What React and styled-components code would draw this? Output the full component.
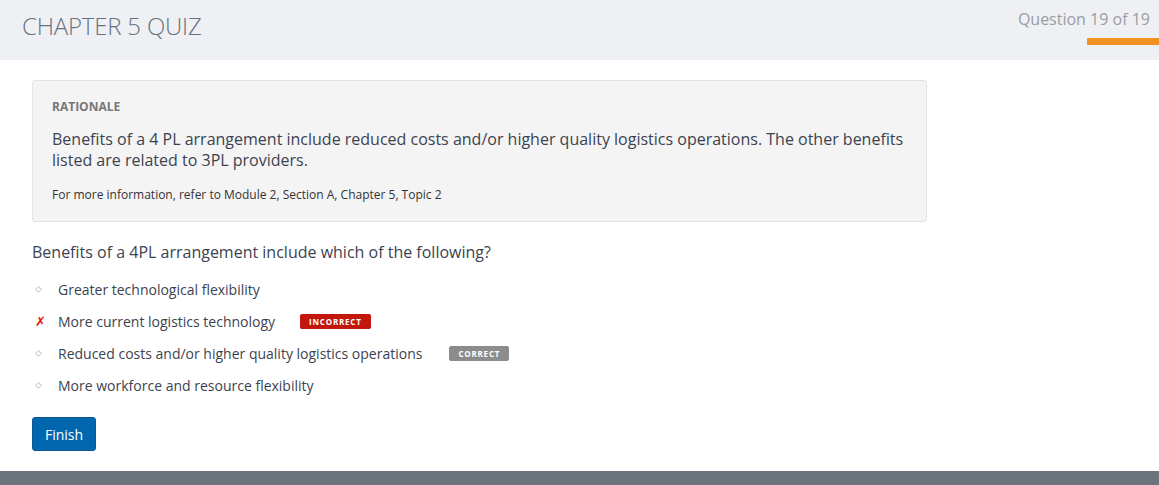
import React from 'react';
import styled, { createGlobalStyle } from 'styled-components';

const GlobalStyle = createGlobalStyle`
  body {
    margin: 0;
    font-family: "Open Sans", "Noto Sans", sans-serif;
    background: #fff;
  }
`;

const Page = styled.div`
  display: flex;
  flex-direction: column;
  height: 485px;
  overflow: hidden;
`;

const Header = styled.header`
  display: flex;
  justify-content: space-between;
  height: 60px;
  background: #eff0f4;
  flex-shrink: 0;
`;

const Title = styled.h1`
  margin: 0;
  padding: 9px 0 0 22px;
  font-size: 24px;
  font-weight: 300;
  color: #66727f;
  letter-spacing: -0.2px;
`;

const Progress = styled.div`
  display: flex;
  flex-direction: column;
  align-items: flex-end;
  padding-top: 8px;
`;

const Counter = styled.div`
  font-size: 16px;
  color: #999da3;
  padding-right: 9px;
`;

const Bar = styled.div`
  margin-top: 8px;
  width: 72px;
  height: 7px;
  background: #f29021;
  border-radius: 1px 0 0 1px;
`;

const Main = styled.main`
  flex: 1;
  padding: 20px 32px 0;
`;

const Rationale = styled.section`
  width: 895px;
  box-sizing: border-box;
  background: #f4f4f4;
  border: 1px solid #e3e3e3;
  border-radius: 3px;
  padding: 17px 19px 18px;
  color: #3c4350;
`;

const Label = styled.div`
  font-size: 12px;
  font-weight: 700;
  color: #777;
`;

const Explanation = styled.p`
  margin: 14px 0 0;
  font-size: 16px;
  line-height: 21px;
`;

const Reference = styled.p`
  margin: 15px 0 0;
  font-size: 12px;
  color: #333;
`;

const Question = styled.p`
  margin: 19px 0 0;
  font-size: 16px;
  color: #3c4350;
`;

const Options = styled.ul`
  list-style: none;
  margin: 10px 0 0;
  padding: 0;
`;

const Option = styled.li`
  display: flex;
  align-items: center;
  height: 32px;
  font-size: 14px;
  color: #3c4350;
`;

const Marker = styled.span`
  width: 26px;
  display: flex;
  align-items: center;
  padding-left: 3px;
  box-sizing: border-box;
`;

const Dot = styled.span`
  width: 3px;
  height: 3px;
  border: 1px solid #d2d2d2;
  transform: rotate(45deg);
  margin-left: 1px;
`;

const Cross = styled.span`
  color: #e8130b;
  font-size: 13px;
  font-weight: 700;
  font-style: italic;
  font-family: "DejaVu Sans", sans-serif;
`;

const Badge = styled.span`
  margin-left: ${({ $gap }) => $gap}px;
  padding: 0 9px;
  height: 15px;
  line-height: 15px;
  border-radius: 2px;
  font-size: 8px;
  font-weight: 700;
  letter-spacing: 0.8px;
  color: #fff;
  background: ${({ $tone }) => ($tone === 'bad' ? '#c2170c' : '#8c8c8c')};
`;

const Finish = styled.button`
  margin-top: 16px;
  width: 64px;
  height: 34px;
  background: #0067ae;
  border: 1px solid #0a5896;
  border-radius: 3px;
  color: #fff;
  font-family: inherit;
  font-size: 14px;
  padding: 0;
`;

const Footer = styled.footer`
  height: 14px;
  background: #6b747c;
  flex-shrink: 0;
`;

const options = [
  { text: 'Greater technological flexibility' },
  { text: 'More current logistics technology', wrong: true, badge: 'INCORRECT', gap: 25 },
  { text: 'Reduced costs and/or higher quality logistics operations', badge: 'CORRECT', gap: 27 },
  { text: 'More workforce and resource flexibility' },
];

export default function App() {
  return (
    <Page>
      <GlobalStyle />
      <Header>
        <Title>CHAPTER 5 QUIZ</Title>
        <Progress>
          <Counter>Question 19 of 19</Counter>
          <Bar />
        </Progress>
      </Header>
      <Main>
        <Rationale>
          <Label>RATIONALE</Label>
          <Explanation>
            Benefits of a 4 PL arrangement include reduced costs and/or higher quality logistics
            operations. The other benefits listed are related to 3PL providers.
          </Explanation>
          <Reference>For more information, refer to Module 2, Section A, Chapter 5, Topic 2</Reference>
        </Rationale>
        <Question>Benefits of a 4PL arrangement include which of the following?</Question>
        <Options>
          {options.map((o) => (
            <Option key={o.text}>
              <Marker>{o.wrong ? <Cross>✗</Cross> : <Dot />}</Marker>
              {o.text}
              {o.badge && (
                <Badge $tone={o.wrong ? 'bad' : 'neutral'} $gap={o.gap}>
                  {o.badge}
                </Badge>
              )}
            </Option>
          ))}
        </Options>
        <Finish>Finish</Finish>
      </Main>
      <Footer />
    </Page>
  );
}
